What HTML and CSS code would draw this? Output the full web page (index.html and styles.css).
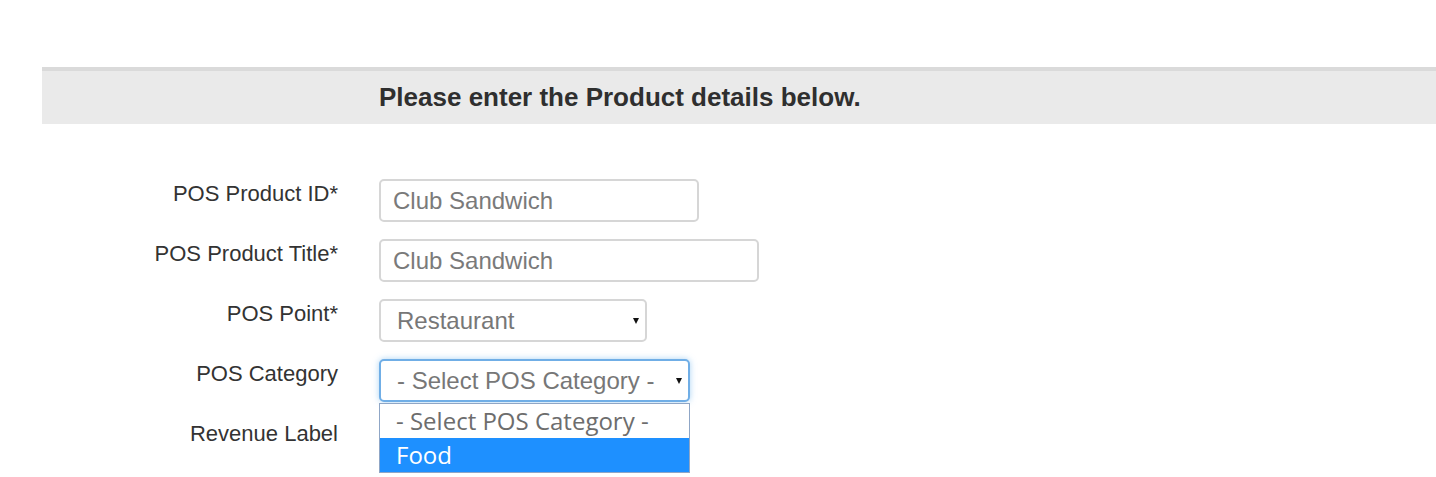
FILE: index.html
```html
<!DOCTYPE html>
<html lang="en">
<head>
<meta charset="utf-8">
<title>Product details</title>
<link rel="stylesheet" href="styles.css">
</head>
<body>
<div class="page">
  <div class="header">
    <div></div>
    <h1 class="title">Please enter the Product details below.</h1>
  </div>
  <form class="form">
    <label class="label">POS Product ID*</label>
    <div class="field"><input class="control w-id" type="text" placeholder="Club Sandwich"></div>

    <label class="label">POS Product Title*</label>
    <div class="field"><input class="control w-title" type="text" placeholder="Club Sandwich"></div>

    <label class="label">POS Point*</label>
    <div class="field"><span class="select w-point"><span class="select-text">Restaurant</span></span></div>

    <label class="label">POS Category</label>
    <div class="field dropdown-host">
      <span class="select w-cat focused"><span class="select-text">- Select POS Category -</span></span>
      <div class="dropdown">
        <div class="option">- Select POS Category -</div>
        <div class="option active">Food</div>
      </div>
    </div>

    <label class="label">Revenue Label</label>
    <div class="field"><div class="spacer"></div></div>
  </form>
</div>
</body>
</html>
```
FILE: styles.css
```css
* { box-sizing: border-box; }
html, body { margin: 0; padding: 0; background: #fff; }
body {
  font-family: "Liberation Sans", Arial, sans-serif;
  color: #333;
  min-height: 477px;
}
.page {
  padding-top: 67px;
  padding-left: 42px;
  padding-bottom: 12px;
  overflow-x: hidden;
}
.header {
  display: grid;
  grid-template-columns: 296px 1fr;
  column-gap: 41px;
  background: #eaeaea;
  border-top: 4px solid #dadada;
  height: 57px;
}
.title {
  margin: 0;
  font-size: 26px;
  font-weight: bold;
  line-height: 53px;
  color: #2f2f2f;
  white-space: nowrap;
}
.form {
  margin-top: 55px;
  display: grid;
  grid-template-columns: 296px 1fr;
  column-gap: 41px;
  row-gap: 17px;
}
.label {
  text-align: right;
  font-size: 22px;
  line-height: 30px;
  color: #333;
  white-space: nowrap;
}
.field { height: 43px; }
.dropdown-host { position: relative; }
.control, .select {
  display: flex;
  align-items: center;
  height: 43px;
  border: 2px solid #d6d6d6;
  border-radius: 5px;
  background: #fff;
  font-family: "Liberation Sans", Arial, sans-serif;
  font-size: 24px;
  color: #777;
}
.control {
  padding: 0 12px;
  outline: none;
}
.control::placeholder { color: #7a7a7a; opacity: 1; }
.select {
  position: relative;
  padding: 0 16px 0 16px;
}
.select::after {
  content: "";
  position: absolute;
  right: 6px;
  top: 17px;
  border-left: 3px solid transparent;
  border-right: 3px solid transparent;
  border-top: 6px solid #111;
}
.select-text { color: #777; white-space: nowrap; }
.focused {
  border-color: #70aee6;
  box-shadow: 0 0 6px rgba(102, 175, 233, 0.55);
}
.w-id { width: 320px; }
.w-title { width: 380px; }
.w-point { width: 268px; }
.w-cat { width: 311px; }
.dropdown {
  position: absolute;
  left: 0;
  top: 44px;
  width: 311px;
  border: 1px solid #8fa6c6;
  background: #fff;
  font-family: "Open Sans", "Noto Sans", sans-serif;
  font-size: 24px;
  z-index: 2;
}
.option {
  height: 34px;
  line-height: 34px;
  padding-left: 16px;
  color: #6d6d6d;
  white-space: nowrap;
}
.option.active {
  background: #1e90ff;
  color: #fff;
}
.spacer { height: 43px; }
```
